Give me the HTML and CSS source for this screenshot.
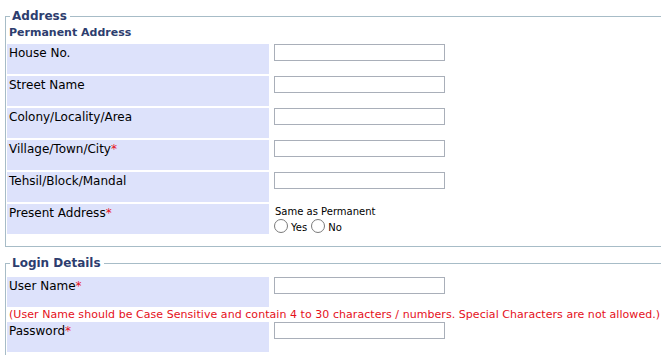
FILE: index.html
```html
<!DOCTYPE html>
<html>
<head>
<meta charset="utf-8">
<link rel="stylesheet" href="styles.css">
</head>
<body>
<div class="page">
  <fieldset class="box box-address">
    <legend class="box-title">Address</legend>
    <div class="sub-title">Permanent Address</div>
    <div class="form-grid">
      <div class="label-cell">House No.</div>
      <div class="field-cell"><input class="text-input" type="text"></div>
      <div class="label-cell">Street Name</div>
      <div class="field-cell"><input class="text-input" type="text"></div>
      <div class="label-cell">Colony/Locality/Area</div>
      <div class="field-cell"><input class="text-input" type="text"></div>
      <div class="label-cell">Village/Town/City<span class="req">*</span></div>
      <div class="field-cell"><input class="text-input" type="text"></div>
      <div class="label-cell">Tehsil/Block/Mandal</div>
      <div class="field-cell"><input class="text-input" type="text"></div>
      <div class="label-cell">Present Address<span class="req">*</span></div>
      <div class="field-cell field-small">
        <div class="same-label">Same as Permanent</div>
        <div class="radio-row">
          <label class="radio-opt"><span class="radio"></span>Yes</label>
          <label class="radio-opt"><span class="radio"></span>No</label>
        </div>
      </div>
    </div>
  </fieldset>

  <fieldset class="box box-login">
    <legend class="box-title">Login Details</legend>
    <div class="form-grid">
      <div class="label-cell">User Name<span class="req">*</span></div>
      <div class="field-cell"><input class="text-input" type="text"></div>
      <div class="hint">(User Name should be Case Sensitive and contain 4 to 30 characters / numbers. Special Characters are not allowed.)</div>
      <div class="label-cell">Password<span class="req">*</span></div>
      <div class="field-cell"><input class="text-input" type="password"></div>
    </div>
  </fieldset>
</div>
</body>
</html>
```

FILE: styles.css
```css
html, body {
  margin: 0;
  padding: 0;
  background: #ffffff;
  overflow: hidden;
}

body {
  font-family: "DejaVu Sans", Verdana, sans-serif;
  font-size: 12px;
  color: #000;
}

.page {
  width: 720px;
}

.box {
  margin: 0 0 0 5px;
  padding: 0 1px 12px 1px;
  border: 1px solid #a7bcc7;
  min-width: 0;
}

.box-address {
  margin-top: 8px;
}

.box-login {
  margin-top: 8px;
}

.box-title {
  padding: 0 3px 0 2px;
  margin-left: 3px;
  font-weight: bold;
  font-size: 12px;
  line-height: 16px;
  color: #2d3d6e;
}

.sub-title {
  font-weight: bold;
  font-size: 11px;
  line-height: 14px;
  color: #2d3d6e;
  padding: 2px 0 0 2px;
  margin-bottom: 4px;
}

.box-login .form-grid {
  margin-top: 6px;
}

.form-grid {
  display: grid;
  grid-template-columns: 262px 1fr;
  column-gap: 5px;
  row-gap: 2px;
}

.label-cell {
  background: #dde2fb;
  height: 30px;
  box-sizing: border-box;
  padding: 2px 0 0 2px;
  line-height: 14px;
}

.text-input {
  display: block;
  box-sizing: border-box;
  width: 171px;
  height: 17px;
  margin: 0;
  padding: 0 2px;
  border: 1px solid #a9afb9;
  background: #fff;
}

.req {
  color: #e5101b;
}

.field-small {
  font-size: 10px;
  padding-top: 2px;
}

.same-label {
  line-height: 12px;
  padding-left: 1px;
}

.radio-row {
  display: flex;
  align-items: flex-end;
  gap: 4px;
  margin-top: 1px;
}

.radio-opt {
  display: flex;
  align-items: flex-end;
  line-height: 11px;
}

.radio {
  display: inline-block;
  width: 12px;
  height: 12px;
  border: 1px solid #7a7a7a;
  border-radius: 50%;
  background: #fff;
  margin-right: 3px;
}

.hint {
  grid-column: 1 / -1;
  color: #e5101b;
  font-size: 11px;
  line-height: 11px;
  padding-left: 2px;
  letter-spacing: 0.05px;
  white-space: nowrap;
}
```
